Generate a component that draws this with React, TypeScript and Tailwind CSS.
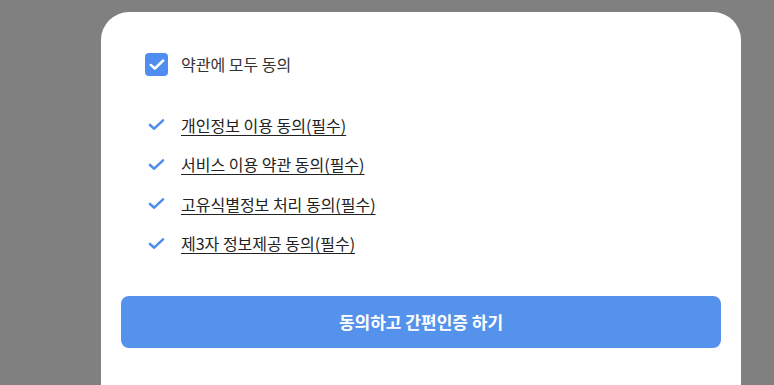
const terms = [
  { id: 1, label: "개인정보 이용 동의(필수)" },
  { id: 2, label: "서비스 이용 약관 동의(필수)" },
  { id: 3, label: "고유식별정보 처리 동의(필수)" },
  { id: 4, label: "제3자 정보제공 동의(필수)" },
];

const CheckMark = ({ className }: { className?: string }) => (
  <svg viewBox="0 0 18 14" className={className} fill="none">
    <path d="M2 7.5 L6.5 11.5 L16 2.5" stroke="currentColor" strokeWidth="2.8" strokeLinecap="round" strokeLinejoin="round" />
  </svg>
);

const App = () => {
  return (
    <div
      className="h-[385px] w-[774px] overflow-hidden bg-[#808080] pt-[12px] pl-[101px]"
      style={{ fontFamily: '"Noto Sans CJK KR", "Noto Sans", sans-serif' }}
    >
      <div className="flex h-[400px] w-[640px] flex-col rounded-[28px] bg-white px-5 pt-[40px]">
        <div className="px-6">
          <label className="flex h-[24px] items-center gap-[13px]">
            <span className="flex h-[23px] w-[23px] items-center justify-center rounded-[4px] bg-[#4f8ef0] text-white">
              <CheckMark className="h-[13px] w-[16px]" />
            </span>
            <span className="-mt-[1px] text-[16px] text-[#333]">약관에 모두 동의</span>
          </label>

          <ul className="mt-[29px] flex flex-col">
            {terms.map((item) => (
              <li key={item.id} className="flex h-[39.5px] items-center gap-[16px] pl-[3px]">
                <CheckMark className="h-[13px] w-[17px] text-[#4f8ef0]" />
                <a href="#" className="text-[16px] text-[#222] underline underline-offset-[3px]">
                  {item.label}
                </a>
              </li>
            ))}
          </ul>
        </div>

        <button className="mt-[33px] h-[52px] w-[600px] rounded-[8px] bg-[#5592ec] text-[17px] font-bold text-white">
          동의하고 간편인증 하기
        </button>
      </div>
    </div>
  );
};

export default App;
